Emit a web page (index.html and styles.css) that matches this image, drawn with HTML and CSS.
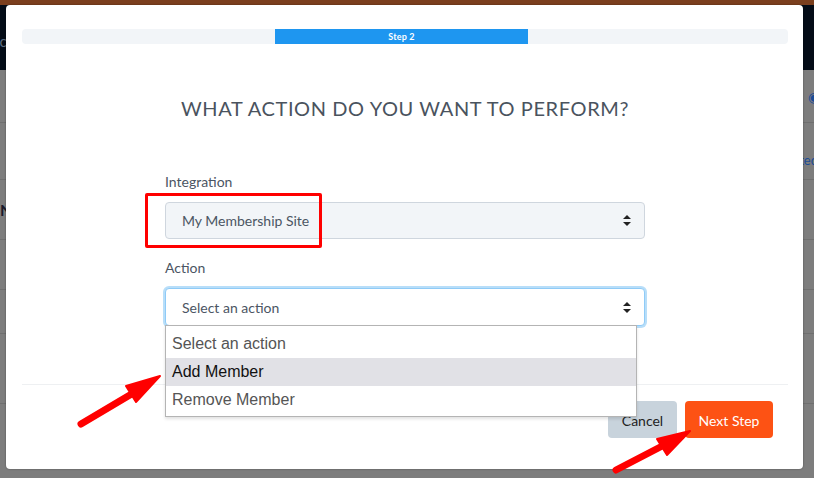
FILE: index.html
```html
<!DOCTYPE html>
<html>
<head>
<meta charset="utf-8">
<link rel="stylesheet" href="styles.css">
</head>
<body>
<div class="page">
  <div class="topstrip"></div>
  <div class="navbar"><span class="nav-text">lc</span></div>
  <div class="content">
    <div class="row r1"><span class="eye">&#9673;</span></div>
    <div class="row r2"><span class="right-text">ted</span></div>
    <div class="row r3"><span class="left-text">N</span></div>
    <div class="row r4"></div>
    <div class="row r5"></div>
    <div class="row r6"></div>
  </div>
</div>

<div class="modal">
  <div class="progress">
    <div class="progress-fill">Step 2</div>
  </div>
  <h2 class="title">WHAT ACTION DO YOU WANT TO PERFORM?</h2>
  <div class="form">
    <label class="label">Integration</label>
    <div class="select filled">
      <span>My Membership Site</span>
      <svg class="sort" width="8" height="11" viewBox="0 0 8 11"><path d="M4 0 L8 4 H0 Z M0 7 H8 L4 11 Z" fill="#222"/></svg>
    </div>
    <label class="label second">Action</label>
    <div class="select-wrap">
      <div class="select focus">
        <span>Select an action</span>
        <svg class="sort" width="8" height="11" viewBox="0 0 8 11"><path d="M4 0 L8 4 H0 Z M0 7 H8 L4 11 Z" fill="#222"/></svg>
      </div>
      <ul class="options">
        <li>Select an action</li>
        <li class="active">Add Member</li>
        <li>Remove Member</li>
      </ul>
    </div>
  </div>
  <div class="footer">
    <button class="btn cancel">Cancel</button>
    <button class="btn next">Next Step</button>
  </div>
  <div class="redbox"></div>
</div>

<svg class="arrows" width="814" height="478" viewBox="0 0 814 478">
  <g fill="#ff0000" stroke="#ff0000" stroke-linecap="round" stroke-linejoin="round">
    <line x1="81" y1="424" x2="140" y2="389" stroke-width="7"/>
    <polygon points="160,376 126,386 136,402" stroke-width="2"/>
    <line x1="616" y1="470" x2="668" y2="443" stroke-width="7"/>
    <polygon points="690,431 657,439 667,455" stroke-width="2"/>
  </g>
</svg>
</body>
</html>
```
FILE: styles.css
```css
* { box-sizing: border-box; }
html, body { margin: 0; padding: 0; }
body {
  width: 814px;
  height: 478px;
  overflow: hidden;
  background: #7d7d7d;
  font-family: Lato, "Open Sans", sans-serif;
  position: relative;
}
.page { display: flex; flex-direction: column; }
.topstrip { height: 5px; background: #7b3f1e; }
.navbar {
  height: 65px;
  background: #040c17;
  display: flex;
  align-items: center;
}
.nav-text {
  color: #5a6a80;
  font-size: 15px;
  margin-left: -4px;
  margin-top: 6px;
}
.content { display: flex; flex-direction: column; }
.row {
  border-bottom: 1px solid #6f6f6f;
  display: flex;
  align-items: center;
  justify-content: space-between;
}
.r1 { height: 53px; }
.r2 { height: 57px; }
.r3 { height: 60px; }
.r4 { height: 50px; }
.r5 { height: 44px; }
.r6 { height: 70px; }
.eye { color: #1c4c95; margin-left: auto; margin-right: -6px; font-size: 14px; }
.right-text { color: #1c4c95; margin-left: auto; margin-right: -4px; font-size: 13px; margin-top: 18px; }
.left-text { color: #1a1a2a; font-weight: 700; font-size: 16px; margin-left: 0; }

.modal {
  position: absolute;
  left: 6px;
  top: 5px;
  width: 797px;
  height: 464px;
  background: #fff;
  border-radius: 4px;
  box-shadow: 0 0 2px rgba(0,0,0,0.4);
  padding: 24px 15px 0 16px;
  display: flex;
  flex-direction: column;
}
.progress {
  height: 15px;
  background: #f2f5f8;
  border-radius: 4px;
  display: flex;
  padding-left: 253px;
}
.progress-fill {
  width: 253px;
  background: #1e96f0;
  color: #fff;
  font-size: 9px;
  font-weight: 700;
  text-align: center;
  line-height: 15px;
  letter-spacing: 0.2px;
}
.title {
  margin: 52px 0 0;
  text-align: center;
  font-weight: 400;
  font-size: 20px;
  line-height: 24px;
  color: #4a535e;
  letter-spacing: 0.6px;
}
.form {
  width: 480px;
  margin: 53px auto 0;
  display: flex;
  flex-direction: column;
}
.label {
  font-size: 14px;
  line-height: 18px;
  color: #4b5563;
  margin-bottom: 11px;
}
.label.second { margin-top: 20px; }
.select {
  height: 37px;
  border: 1px solid #cfd6de;
  border-radius: 4px;
  display: flex;
  align-items: center;
  justify-content: space-between;
  padding: 0 13px 0 16px;
  font-size: 14px;
  color: #4b5563;
}
.select.filled { background: #f2f5f8; }
.select.focus {
  background: #fff;
  border: 1px solid #8fcbf7;
  box-shadow: 0 0 0 2px #b8def9;
  height: 38px;
}
.sort { display: block; }
.select-wrap { position: relative; }
.options {
  position: absolute;
  left: 0;
  top: 37px;
  width: 472px;
  margin: 0;
  padding: 4px 0 2px;
  list-style: none;
  background: #fff;
  border: 1px solid #b4b4b4;
  box-shadow: 0 2px 3px rgba(0,0,0,0.12);
  font-family: "Liberation Sans", Arial, sans-serif;
  font-size: 16px;
  z-index: 2;
}
.options li {
  height: 28px;
  line-height: 28px;
  padding-left: 6px;
  color: #555;
}
.options li.active { background: #e1e1e6; color: #111; }
.footer {
  margin-top: 58px;
  border-top: 1px solid #eef0f2;
  padding-top: 16px;
  display: flex;
  justify-content: flex-end;
  gap: 8px;
  padding-right: 15px;
}
.btn {
  height: 37px;
  border: none;
  border-radius: 4px;
  font-family: Lato, "Open Sans", sans-serif;
  font-size: 14px;
  padding: 2px 0 0;
}
.cancel { width: 69px; background: #c8d3dc; color: #222; }
.next { width: 88px; background: #fd5214; color: #fff; }
.redbox {
  position: absolute;
  left: 139px;
  top: 188px;
  width: 177px;
  height: 55px;
  border: 3px solid #ff0000;
  border-radius: 2px;
}
.arrows {
  position: absolute;
  left: 0;
  top: 0;
  pointer-events: none;
}
```
